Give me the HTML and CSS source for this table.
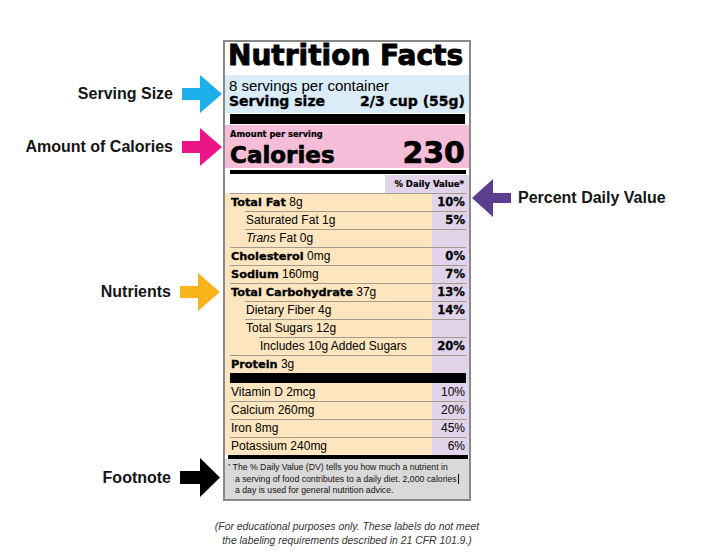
FILE: index.html
```html
<!DOCTYPE html>
<html lang="en">
<head>
<meta charset="utf-8">
<title>Nutrition Facts Label Explained</title>
<link rel="stylesheet" href="styles.css">
</head>
<body>
<div class="stage">
  <div class="callout to-right c-serving">
    <span class="callout-text">Serving Size</span>
    <svg class="arrow" width="40" height="38" viewBox="0 0 40 38"><polygon points="0,13 18,13 18,0 40,19 18,38 18,25 0,25" fill="#1cafea"/></svg>
  </div>
  <div class="callout to-right c-calories">
    <span class="callout-text">Amount of Calories</span>
    <svg class="arrow" width="40" height="38" viewBox="0 0 40 38"><polygon points="0,13 18,13 18,0 40,19 18,38 18,25 0,25" fill="#ec1489"/></svg>
  </div>
  <div class="callout to-left c-dv">
    <svg class="arrow" width="39" height="38" viewBox="0 0 39 38"><polygon points="0,19 21,0 21,14 39,14 39,24 21,24 21,38" fill="#5c3d8f"/></svg>
    <span class="callout-text">Percent Daily Value</span>
  </div>
  <div class="callout to-right c-nutrients">
    <span class="callout-text">Nutrients</span>
    <svg class="arrow" width="40" height="38" viewBox="0 0 40 38"><polygon points="0,13 18,13 18,0 40,19 18,38 18,25 0,25" fill="#f7b51b"/></svg>
  </div>
  <div class="callout to-right c-footnote">
    <span class="callout-text">Footnote</span>
    <svg class="arrow" width="40" height="39" viewBox="0 0 40 39"><polygon points="0,13 20,13 20,0 40,19.5 20,39 20,26 0,26" fill="#000"/></svg>
  </div>

  <div class="column">
    <section class="label">
      <h1 class="title">Nutrition Facts</h1>
      <div class="serving">
        <div class="servings-count">8 servings per container</div>
        <div class="serving-size"><span>Serving size</span><span>2/3 cup (55g)</span></div>
      </div>
      <div class="bar bar-thick"></div>
      <div class="calories">
        <div class="amount">Amount per serving</div>
        <div class="calories-line"><span class="cal-key">Calories</span><span class="cal-val">230</span></div>
      </div>
      <div class="bar bar-medium"></div>
      <div class="dv-head"><span>% Daily Value*</span></div>
      <div class="nutrients">
        <div class="row"><span><b>Total Fat</b> 8g</span><b class="dv">10%</b></div>
        <div class="row sub"><span>Saturated Fat 1g</span><b class="dv">5%</b></div>
        <div class="row sub"><span><i>Trans</i> Fat 0g</span></div>
        <div class="row"><span><b>Cholesterol</b> 0mg</span><b class="dv">0%</b></div>
        <div class="row"><span><b>Sodium</b> 160mg</span><b class="dv">7%</b></div>
        <div class="row"><span><b>Total Carbohydrate</b> 37g</span><b class="dv">13%</b></div>
        <div class="row sub"><span>Dietary Fiber 4g</span><b class="dv">14%</b></div>
        <div class="row sub"><span>Total Sugars 12g</span></div>
        <div class="row sub2"><span>Includes 10g Added Sugars</span><b class="dv">20%</b></div>
        <div class="row"><span><b>Protein</b> 3g</span></div>
        <div class="bar-in"></div>
        <div class="row no-line"><span>Vitamin D 2mcg</span><span>10%</span></div>
        <div class="row"><span>Calcium 260mg</span><span>20%</span></div>
        <div class="row"><span>Iron 8mg</span><span>45%</span></div>
        <div class="row"><span>Potassium 240mg</span><span>6%</span></div>
      </div>
      <div class="bar bar-bottom"></div>
      <div class="footnote"><span class="ast">*</span> The % Daily Value (DV) tells you how much a nutrient in<br>a serving of food contributes to a daily diet. 2,000 calories<span class="caret"></span><br>a day is used for general nutrition advice.</div>
    </section>
    <p class="disclaimer">(For educational purposes only. These labels do not meet<br>the labeling requirements described in 21 CFR 101.9.)</p>
  </div>
</div>
</body>
</html>
```

FILE: styles.css
```css
html, body {
  margin: 0;
  padding: 0;
  background: #ffffff;
}

body {
  font-family: "Liberation Sans", Arial, sans-serif;
  color: #000;
  width: 704px;
  height: 558px;
  overflow: hidden;
}

.stage {
  position: relative;
  width: 704px;
  padding-top: 40px;
}

.column {
  width: 248px;
  margin-left: 223px;
}

/* ---------- callouts ---------- */
.callout {
  position: absolute;
  display: flex;
  align-items: center;
  gap: 9px;
  white-space: nowrap;
}

.callout-text {
  font-family: "Liberation Sans", Arial, sans-serif;
  font-weight: bold;
  font-size: 16px;
  color: #141414;
}

.arrow {
  display: block;
}

.c-serving { top: 75px; right: 482px; }
.c-calories { top: 128px; right: 482px; }
.c-nutrients { top: 273px; right: 484px; }
.c-footnote { top: 458px; right: 484px; }
.c-dv { top: 179px; left: 472px; gap: 7px; }

/* ---------- label ---------- */
.label {
  width: 248px;
  box-sizing: border-box;
  border: 2px solid #8a8a8a;
  background: #fff;
}

.title {
  margin: 0;
  padding: 0 0 5px 3px;
  font-family: "DejaVu Sans", sans-serif;
  font-weight: bold;
  font-size: 28px;
  line-height: 28px;
  white-space: nowrap;
  -webkit-text-stroke: 0.9px #000;
}

.serving {
  background: #d9ecf8;
  padding: 3px 4px 4px 4px;
}

.servings-count {
  font-size: 15px;
  line-height: 15px;
  white-space: nowrap;
}

.serving-size {
  display: flex;
  justify-content: space-between;
  margin-top: 1px;
  font-family: "DejaVu Sans", sans-serif;
  font-weight: bold;
  font-size: 14px;
  line-height: 15px;
  white-space: nowrap;
  -webkit-text-stroke: 0.35px #000;
}

.bar {
  background: #000;
}

.bar-thick {
  height: 10px;
  margin: 1px 4px 1px 5px;
}

.calories {
  background: #f6bdd9;
  padding: 4px 4px 1px 5px;
}

.amount {
  font-family: "DejaVu Sans", sans-serif;
  font-weight: bold;
  font-size: 8.3px;
  line-height: 10px;
  white-space: nowrap;
  -webkit-text-stroke: 0.2px #000;
}

.calories-line {
  display: flex;
  justify-content: space-between;
  align-items: baseline;
  font-family: "DejaVu Sans", sans-serif;
  font-weight: bold;
  line-height: 28px;
  height: 28px;
  -webkit-text-stroke: 0.7px #000;
}

.cal-key { font-size: 23px; }
.cal-val { font-size: 30px; }

.bar-medium {
  height: 4px;
  margin: 2px 3px 0 5px;
}

.dv-head {
  display: flex;
  justify-content: flex-end;
  height: 19px;
}

.dv-head span {
  box-sizing: border-box;
  width: 84px;
  margin-top: 1px;
  height: 18px;
  background: #e1d4ea;
  text-align: right;
  padding-right: 5px;
  font-family: "DejaVu Sans", sans-serif;
  font-weight: bold;
  font-size: 8.5px;
  line-height: 18px;
  white-space: nowrap;
  -webkit-text-stroke: 0.2px #000;
}

.nutrients {
  background: linear-gradient(90deg, #fde6bf 0, #fde6bf 207px, #e1d4ea 207px, #e1d4ea 100%);
  padding: 0 3px 0 5px;
}

.row {
  box-sizing: border-box;
  height: 18px;
  border-top: 1px solid #a39b8c;
  display: flex;
  justify-content: space-between;
  align-items: baseline;
  padding: 0 1px 0 1px;
  font-size: 12px;
  line-height: 17px;
  white-space: nowrap;
}

.row b {
  font-family: "DejaVu Sans", sans-serif;
  font-weight: bold;
  font-size: 11.3px;
  -webkit-text-stroke: 0.3px #000;
}

.row .dv {
  font-size: 11.6px;
}

.row.sub { margin-left: 15px; }
.row.sub2 { margin-left: 29px; }
.row.no-line { border-top: 0; line-height: 18px; }

.bar-in {
  height: 10px;
  background: #000;
}

.bar-bottom {
  height: 4px;
  margin: 0 1px 0 3px;
}

.footnote {
  background: #d9d9d9;
  padding: 2px 3px 2px 10px;
  text-indent: -7px;
  font-size: 8.7px;
  line-height: 11.5px;
  color: #111;
  white-space: nowrap;
}

.ast {
  font-size: 6px;
  vertical-align: 2px;
}

.caret {
  display: inline-block;
  width: 1px;
  height: 10px;
  background: #000;
  vertical-align: -2px;
  margin-left: 1px;
}

.disclaimer {
  margin: 19px -40px 0 -40px;
  text-align: center;
  font-style: italic;
  font-size: 10.4px;
  line-height: 14px;
  color: #333;
  white-space: nowrap;
}
```
